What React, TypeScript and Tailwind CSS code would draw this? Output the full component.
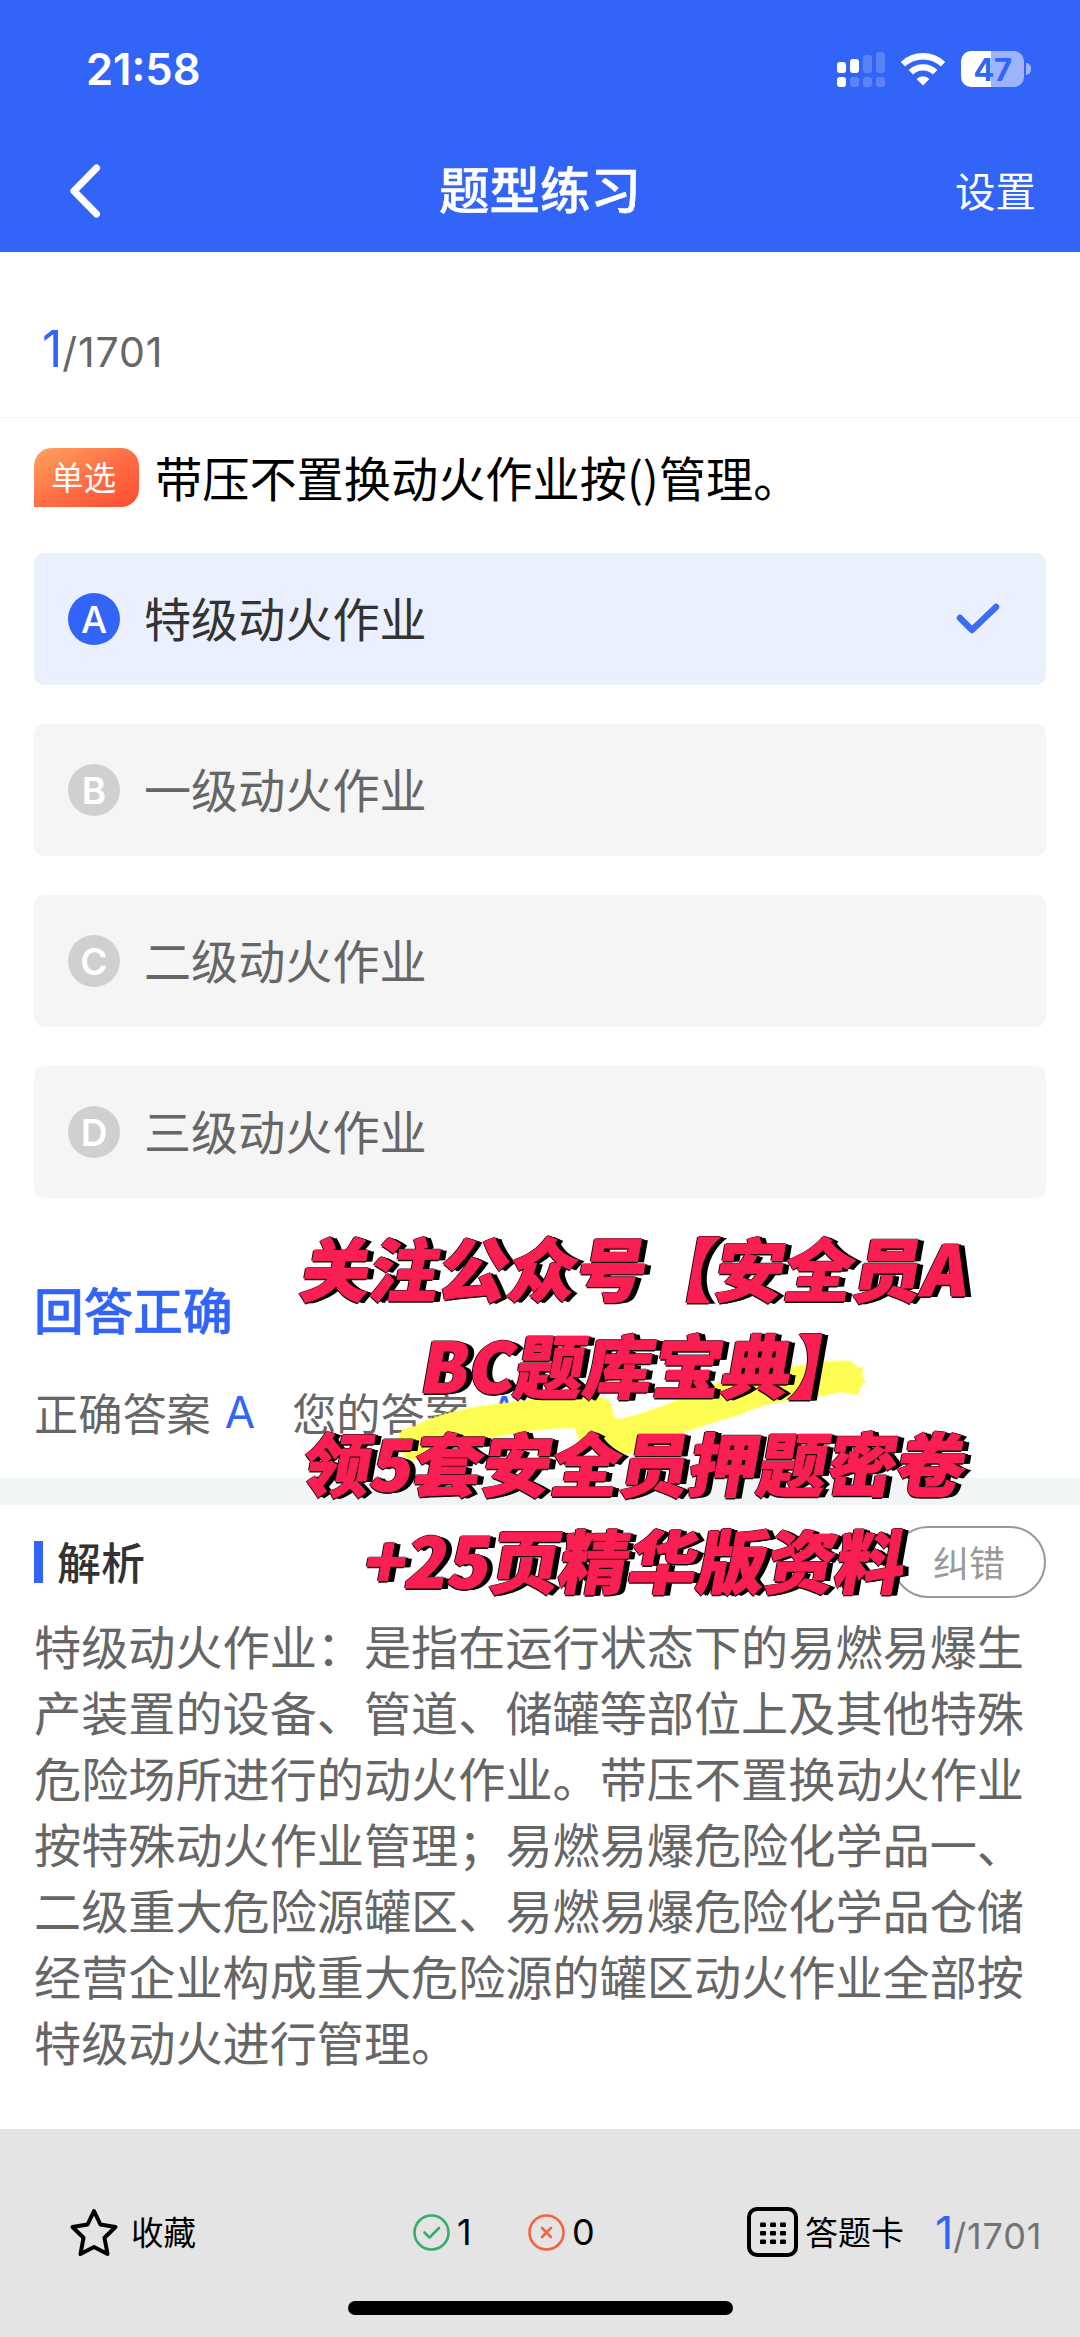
import React from "react";

const CJK = "font-['Noto_Sans_CJK_SC',sans-serif]";

const options = [
  { key: "A", text: "特级动火作业", selected: true },
  { key: "B", text: "一级动火作业", selected: false },
  { key: "C", text: "二级动火作业", selected: false },
  { key: "D", text: "三级动火作业", selected: false },
];

const analysis = [
  "特级动火作业：是指在运行状态下的易燃易爆生",
  "产装置的设备、管道、储罐等部位上及其他特殊",
  "危险场所进行的动火作业。带压不置换动火作业",
  "按特殊动火作业管理；易燃易爆危险化学品一、",
  "二级重大危险源罐区、易燃易爆危险化学品仓储",
  "经营企业构成重大危险源的罐区动火作业全部按",
  "特级动火进行管理。",
];

function Signal() {
  return (
    <svg width="48" height="37" viewBox="0 0 48 37" fill="#fff">
      <rect x="0" y="11" width="9" height="11" rx="3" />
      <rect x="13" y="8" width="9" height="14" rx="3" />
      <rect x="26" y="4" width="9" height="18" rx="3" opacity=".2" />
      <rect x="39" y="1" width="9" height="21" rx="3" opacity=".2" />
      <rect x="0" y="26" width="9" height="10" rx="3" />
      <rect x="13" y="26" width="9" height="10" rx="3" opacity=".2" />
      <rect x="26" y="26" width="9" height="10" rx="3" opacity=".2" />
      <rect x="39" y="26" width="9" height="10" rx="3" opacity=".2" />
    </svg>
  );
}

function Wifi() {
  return (
    <svg width="46" height="34" viewBox="0 0 46 34" fill="none">
      <path d="M3 12.2 A29 29 0 0 1 43 12.2" stroke="#fff" strokeWidth="6.4" />
      <path d="M10.8 20.3 A17.6 17.6 0 0 1 35.2 20.3" stroke="#fff" strokeWidth="6.4" />
      <path d="M23 33.5 L16.6 27 A9 9 0 0 1 29.4 27 Z" fill="#fff" />
    </svg>
  );
}

function Battery() {
  return (
    <div className="flex items-center gap-[2px]">
      <div className="flex h-[36px] w-[63px] items-center justify-center rounded-[10px] bg-[linear-gradient(90deg,#fff_48%,#9db3fb_48%)] font-['Inter',sans-serif] text-[31px] leading-none font-bold tracking-[-0.5px] text-[#3264f7]">
        47
      </div>
      <div className="h-[12px] w-[5px] rounded-r-full bg-[#9db3fb]" />
    </div>
  );
}

/** One caption line; each glyph is its own span so its outline covers the neighbour before it. */
function CaptionLine({ text, className = "" }: { text: string; className?: string }) {
  return (
    <div className={`-skew-x-[10deg] ${className}`}>
      {Array.from(text).map((ch, i) => (
        <span key={i} className="relative">{ch}</span>
      ))}
    </div>
  );
}

export default function App() {
  return (
    <div className={`relative flex h-[2337px] w-[1080px] flex-col overflow-hidden bg-white ${CJK}`}>
      <header className="h-[252px] shrink-0 bg-[#3264f7] text-white">
        <div className="flex h-[138px] items-center justify-between pr-[49px] pl-[86px]">
          <span className="pt-[1px] font-['Inter',sans-serif] text-[43.5px] leading-none font-semibold">21:58</span>
          <div className="flex items-center">
            <Signal />
            <div className="ml-[15px]"><Wifi /></div>
            <div className="ml-[15px]"><Battery /></div>
          </div>
        </div>
        <div className="grid h-[105px] grid-cols-[1fr_auto_1fr] items-center pr-[44px] pl-[68px]">
          <svg width="34" height="56" viewBox="0 0 34 56" fill="none" stroke="#fff" strokeWidth="7" strokeLinecap="round" strokeLinejoin="round">
            <path d="M28.5 5 L6 28 L28.5 51" />
          </svg>
          <h1 className="mr-[24px] pb-[7px] text-[50.5px] leading-[70px] font-medium [-webkit-text-stroke:0.5px_#fff]">题型练习</h1>
          <span className="justify-self-end pb-[2px] text-[40.5px] leading-[60px]">设置</span>
        </div>
      </header>

      <div className="flex h-[166px] shrink-0 items-baseline border-b border-[#f2f3f4] pt-[67px] pl-[42px] font-['Inter',sans-serif] leading-[60px]">
        <span className="text-[50px] text-[#3264f7]">1</span>
        <span className="text-[41px] tracking-[0.9px] text-[#666]">/1701</span>
      </div>

      <main className="shrink-0 px-[34px]">
        <div className="mt-[30px] flex h-[59px] items-center">
          <span className="flex h-[59px] w-[105px] items-center justify-center rounded-[18px] rounded-bl-none bg-linear-to-br from-[#ffa25f] via-[#ff6f45] to-[#ff4a31] pr-[6px] pb-[2px] text-[32.5px] leading-none text-white">
            单选
          </span>
          <span className="ml-[16px] pb-[2px] text-[47.2px] leading-[59px] text-black">带压不置换动火作业按()管理。</span>
        </div>
        <div className="mt-[46px] flex flex-col gap-[39px]">
          {options.map((o) => (
            <div
              key={o.key}
              className={`flex h-[132px] items-center rounded-[10px] pr-[46px] pl-[34px] ${o.selected ? "bg-[#eaf0fe] text-[#333]" : "bg-[#f5f5f5] text-[#666]"}`}
            >
              <span
                className={`flex size-[52px] items-center justify-center rounded-full font-['Inter',sans-serif] text-[37px] leading-none text-white ${o.selected ? "bg-[#3264f7] font-medium" : "bg-[#d1d0d0] font-semibold"}`}
              >
                {o.key}
              </span>
              <span className="ml-[24px] pb-[4px] text-[47.1px] leading-[60px]">{o.text}</span>
              {o.selected && (
                <svg className="ml-auto" width="44" height="32" viewBox="0 0 44 32" fill="none" stroke="#3f6cf0" strokeWidth="6.5" strokeLinecap="round" strokeLinejoin="round">
                  <path d="M4 15 L16 27 L40 4" />
                </svg>
              )}
            </div>
          ))}
        </div>
        <h2 className="mt-[78px] text-[49.7px] leading-[64px] font-medium text-[#3264f7] [-webkit-text-stroke:0.5px_#3264f7]">回答正确</h2>
        <div className="mt-[42px] flex text-[44.2px] leading-[60px] text-[#666]">
          <span>正确答案</span>
          <span className="ml-[14px] font-['Inter',sans-serif] text-[44px] text-[#3264f7]">A</span>
          <span className="ml-[37px]">您的答案</span>
          <span className="ml-[20px] font-['Inter',sans-serif] text-[44px] text-[#3264f7]">A</span>
        </div>
      </main>

      <div className="mt-[36px] h-[27px] shrink-0 bg-[#f2f5f6]" />

      <section className="shrink-0 px-[34px]">
        <div className="mt-[21px] flex h-[72px] items-center">
          <span className="h-[42px] w-[9px] bg-[#3264f7]" />
          <h3 className="ml-[14px] pb-[3px] text-[44px] leading-[60px] font-medium text-[#333]">解析</h3>
          <button className="ml-auto h-[72px] w-[154px] rounded-full border-2 border-[#999] pb-[3px] text-[36px] leading-[60px] text-[#999]">
            纠错
          </button>
        </div>
        <div className="mt-[14px] text-[47.15px] leading-[66px] whitespace-nowrap text-[#666]">
          {analysis.map((line) => (
            <p key={line}>{line}</p>
          ))}
        </div>
      </section>

      <footer className="mt-auto flex h-[208px] shrink-0 flex-col bg-[#e4e4e4] text-black">
        <div className="mt-[73px] flex h-[60px] items-center pl-[69px]">
          <svg width="50" height="50" viewBox="0 0 50 50" fill="none" stroke="#000" strokeWidth="4" strokeLinejoin="round">
            <path d="M25 4 L31.4 17.5 L46.5 20 L35.5 30.8 L38.5 47 L25 40 L11.5 47 L14.5 30.8 L3.5 20 L18.6 17.5 Z" />
          </svg>
          <span className="ml-[12px] pb-[2px] text-[32.5px] leading-[50px]">收藏</span>
          <svg className="ml-[217px]" width="37" height="37" viewBox="0 0 37 37" fill="none" stroke="#34ae68" strokeWidth="2.6" strokeLinecap="round" strokeLinejoin="round">
            <circle cx="18.5" cy="18.5" r="17" />
            <path d="M11.5 18.5 L16.5 23.5 L26 14" />
          </svg>
          <span className="w-[78px] pl-[7px] font-['Inter',sans-serif] text-[36px] leading-[50px]">1</span>
          <svg width="37" height="37" viewBox="0 0 37 37" fill="none" stroke="#f5633f" strokeWidth="2.6" strokeLinecap="round">
            <circle cx="18.5" cy="18.5" r="17" />
            <path d="M14 14 L23 23 M23 14 L14 23" />
          </svg>
          <span className="w-[182px] pl-[7px] font-['Inter',sans-serif] text-[36px] leading-[50px]">0</span>
          <svg width="51" height="50" viewBox="0 0 51 50" fill="none">
            <rect x="2" y="2" width="47" height="46" rx="8" stroke="#000" strokeWidth="4" />
            {[15.5, 24, 32.5].map((y) =>
              [13, 23, 33].map((x) => <rect key={`${x}-${y}`} x={x} y={y} width="6" height="4.4" rx="1" fill="#000" />)
            )}
          </svg>
          <span className="ml-[7px] pb-[3px] text-[33px] leading-[50px]">答题卡</span>
          <span className="ml-[31px] flex items-baseline pt-[4px] font-['Inter',sans-serif] leading-[50px]">
            <span className="text-[45px] text-[#3264f7]">1</span>
            <span className="text-[36px] tracking-[0.8px] text-[#737373]">/1701</span>
          </span>
        </div>
        <div className="mx-auto mt-[39px] h-[14px] w-[385px] rounded-full bg-black" />
      </footer>

      {/* Promotional caption laid over the answer area */}
      <svg className="absolute top-[1350px] left-[390px]" width="490" height="120" viewBox="390 1350 490 120">
        <path
          d="M396 1444 L402 1430 L416 1426 Q440 1413 477 1407 L528 1400 L600 1397 L610 1402 L614 1418 L622 1419 Q660 1410 700 1390 Q750 1370 800 1366 L822 1362 L850 1361 L858 1368 L863 1368 L861 1376 L865 1381 L861 1386 L858 1394 L840 1392 L820 1396 Q770 1400 740 1414 L689 1430 Q660 1440 640 1452 L620 1454 Q590 1450 579 1440 L576 1428 Q540 1427 500 1436 Q450 1446 424 1458 L408 1460 Z"
          fill="#fdfd54"
          stroke="#fdfd54"
          strokeOpacity=".55"
          strokeWidth="3"
          strokeDasharray="3 2"
        />
      </svg>
      <div className="absolute top-[1218px] left-[236px] flex w-[800px] flex-col items-center text-[69px] leading-[97.3px] font-black whitespace-nowrap text-[#f91f52] [-webkit-text-stroke:1.1px_#f91f52] [text-shadow:-1.5px_0_0_#15060a,0_-1.5px_0_#15060a,0_1.5px_0_#15060a,1.5px_0_0_#000,3px_0_0_#000,5px_0.5px_0_#000,6.5px_1px_0_#000]">
        <CaptionLine text="关注公众号【安全员A" />
        <CaptionLine text="BC题库宝典】" className="ml-[12px]" />
        <CaptionLine text="领5套安全员押题密卷" />
        <CaptionLine text="+25页精华版资料" />
      </div>
    </div>
  );
}
